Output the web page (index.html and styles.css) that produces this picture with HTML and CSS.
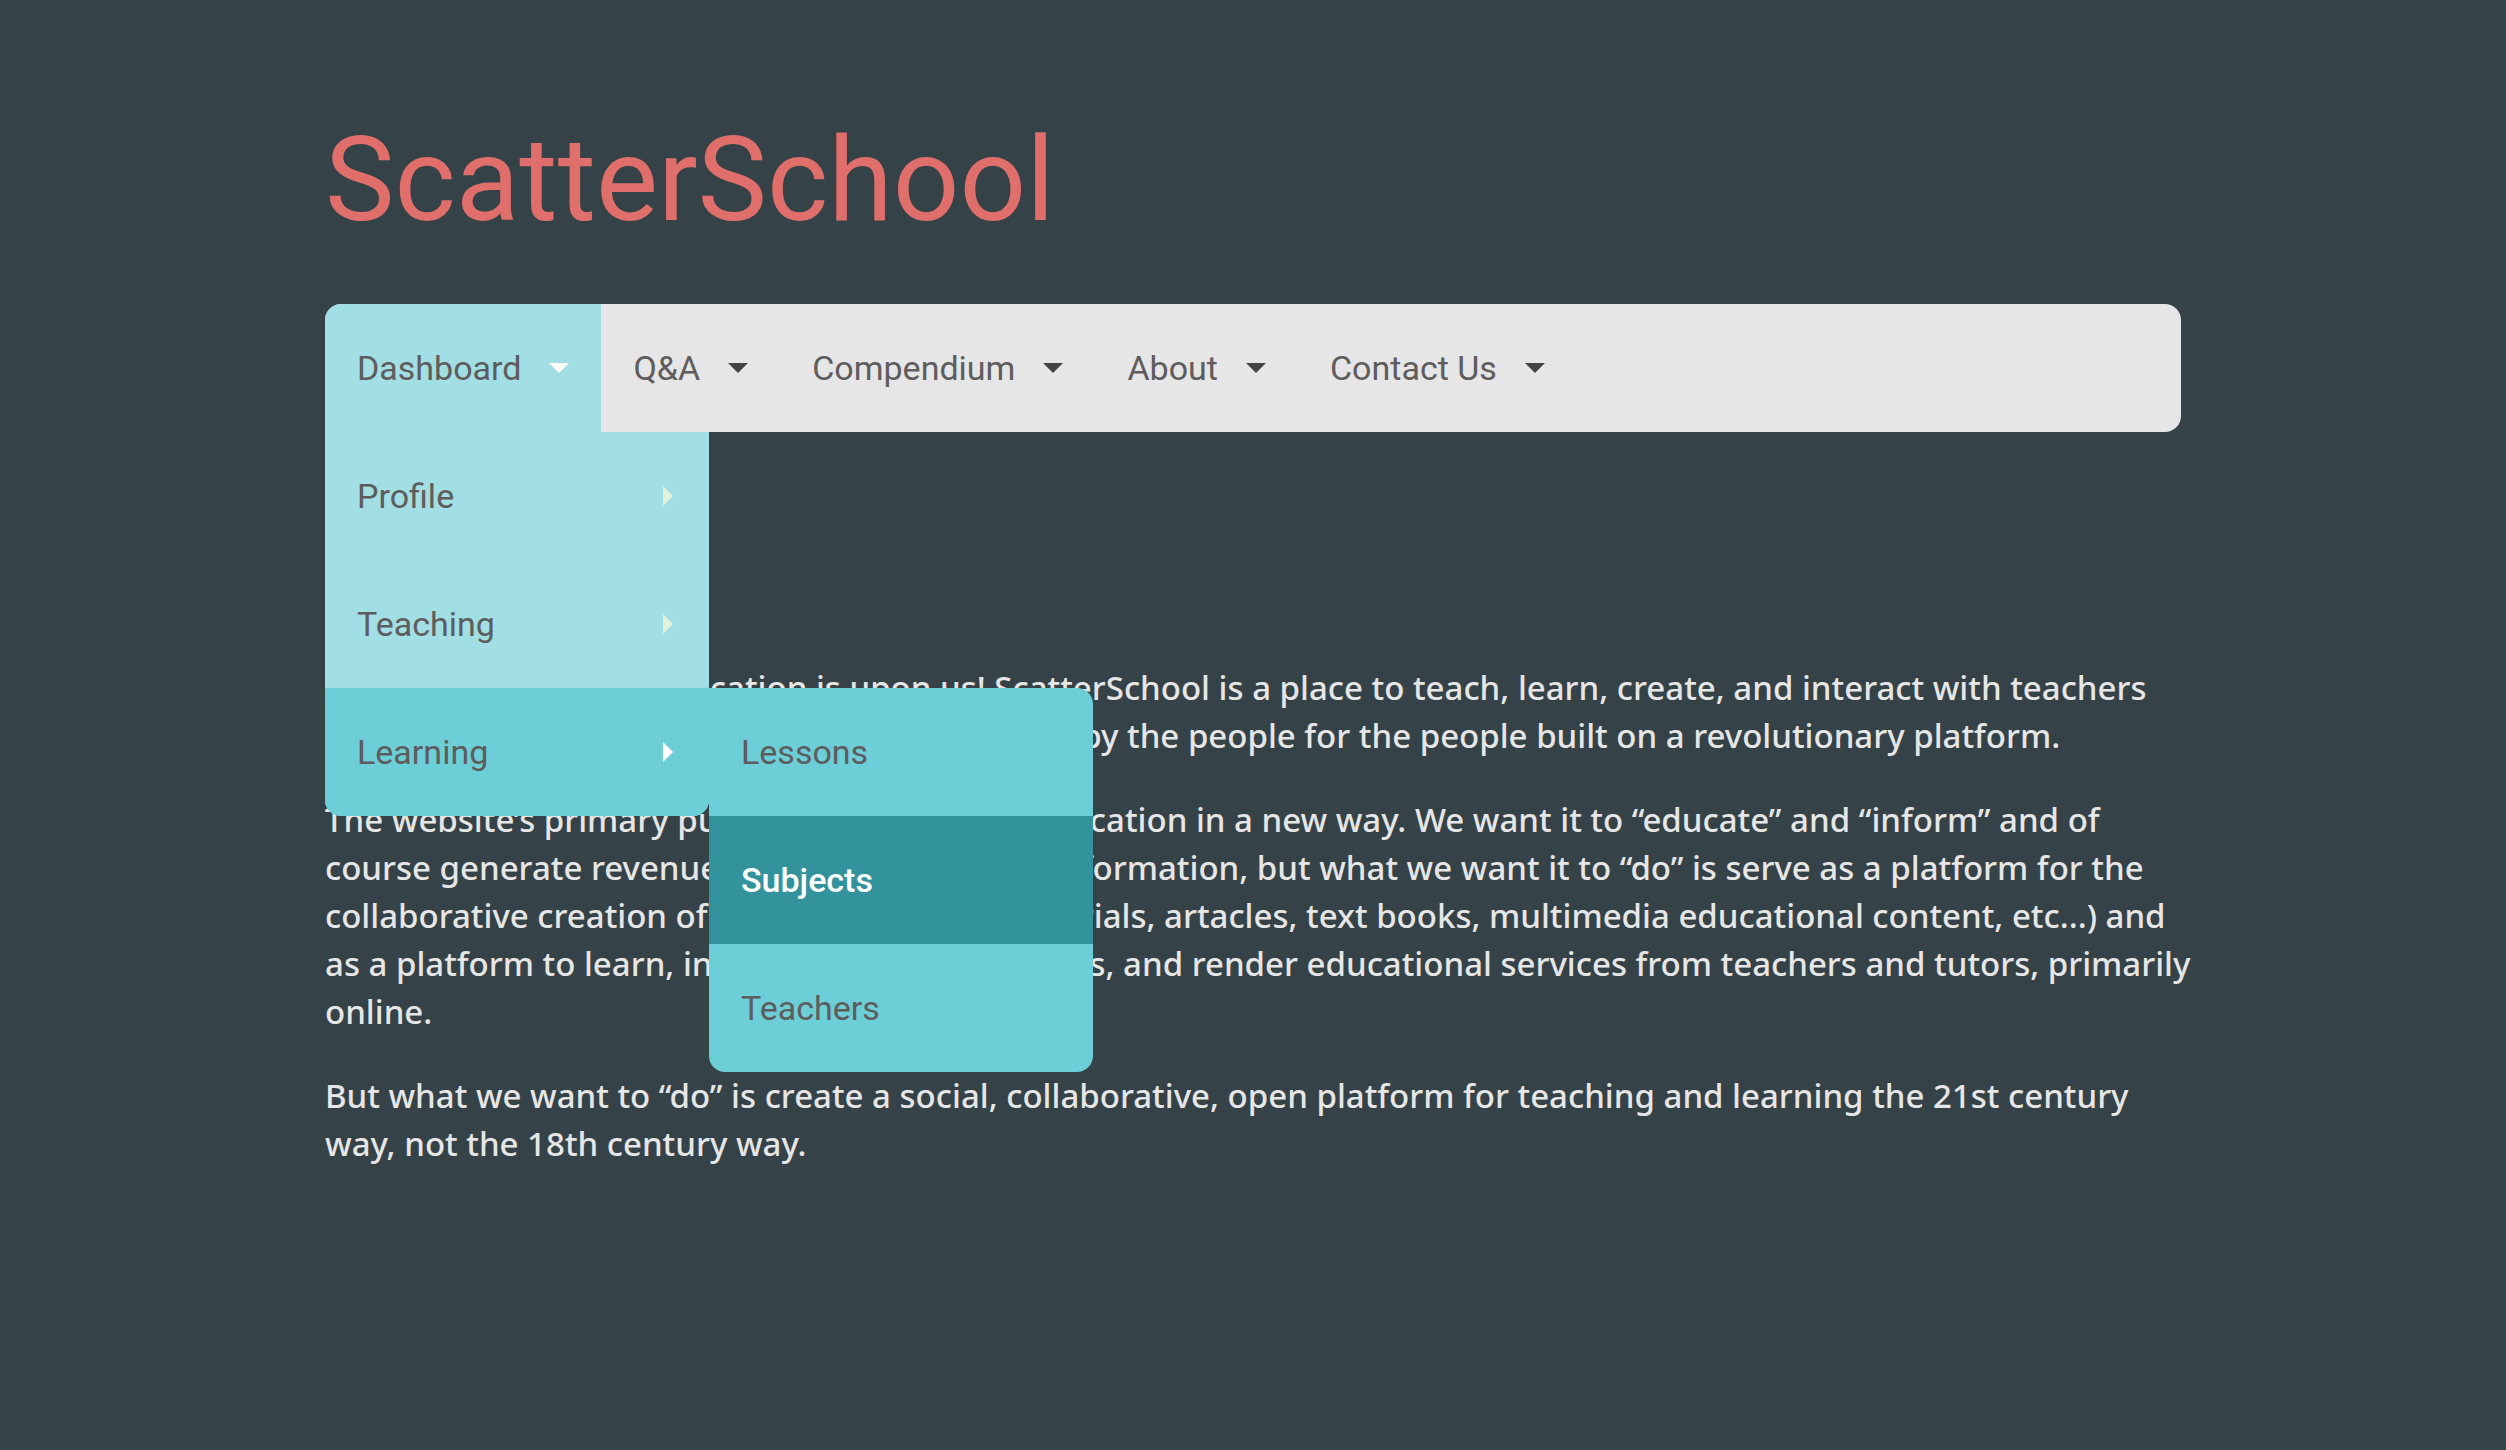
FILE: index.html
```html
<!DOCTYPE html>
<html lang="en">
<head>
  <meta charset="utf-8">
  <meta name="viewport" content="width=device-width, initial-scale=1">
  <title>ScatterSchool</title>
  <link rel="stylesheet" href="styles.css">
</head>
<body>
  <div class="page">
    <header>
      <h1 class="site-title">ScatterSchool</h1>
      <nav class="nav" aria-label="Main">
        <ul class="menu-bar">
          <li class="menu-item is-open">
            <a class="menu-link" href="#dashboard">Dashboard <span class="caret-down"></span></a>
            <ul class="submenu">
              <li><a class="submenu-link" href="#profile">Profile <span class="caret-right"></span></a></li>
              <li><a class="submenu-link" href="#teaching">Teaching <span class="caret-right"></span></a></li>
              <li class="menu-item is-active">
                <a class="submenu-link" href="#learning">Learning <span class="caret-right"></span></a>
                <ul class="flyout">
                  <li><a class="submenu-link" href="#lessons">Lessons</a></li>
                  <li><a class="submenu-link is-hovered" href="#subjects">Subjects</a></li>
                  <li><a class="submenu-link" href="#teachers">Teachers</a></li>
                </ul>
              </li>
            </ul>
          </li>
          <li class="menu-item"><a class="menu-link" href="#qa">Q&amp;A <span class="caret-down"></span></a></li>
          <li class="menu-item"><a class="menu-link" href="#compendium">Compendium <span class="caret-down"></span></a></li>
          <li class="menu-item"><a class="menu-link" href="#about">About <span class="caret-down"></span></a></li>
          <li class="menu-item"><a class="menu-link" href="#contact">Contact Us <span class="caret-down"></span></a></li>
        </ul>
      </nav>
    </header>
    <main class="content">
      <p>A new generation in education is upon us! ScatterSchool is a place to teach, learn, create, and interact with teachers<br>
      and students from around the world. It is made by the people for the people built on a revolutionary platform.</p>
      <p>The website’s primary purpose is to improve education in a new way. We want it to “educate” and “inform” and of<br>
      course generate revenue by providing helpful information, but what we want it to “do” is serve as a platform for the<br>
      collaborative creation of useful knowledge (tutorials, artacles, text books, multimedia educational content, etc...) and<br>
      as a platform to learn, interact with fellow writers, and render educational services from teachers and tutors, primarily<br>
      online.</p>
      <p>But what we want to “do” is create a social, collaborative, open platform for teaching and learning the 21st century<br>
      way, not the 18th century way.</p>
    </main>
  </div>
</body>
</html>
```
FILE: styles.css
```css
* {
  box-sizing: border-box;
}

body {
  margin: 0;
  background: #354247;
  color: #e6e6e6;
  font-family: "Noto Sans", sans-serif;
}

ul {
  margin: 0;
  padding: 0;
  list-style: none;
}

.page {
  max-width: 1856px;
  margin: 0 auto;
  padding: 112px 0;
}

.site-title {
  margin: 0 0 56px;
  color: #e06f6b;
  font: 400 117px/136px Roboto, sans-serif;
}

/* Navigation */
.nav {
  font: 400 34px/40px Roboto, sans-serif;
}

.menu-bar {
  display: flex;
  border-radius: 16px;
  background: #e6e6e6;
}

.menu-item {
  position: relative;
}

.menu-link,
.submenu-link {
  display: flex;
  align-items: center;
  gap: 28px;
  padding: 44px 32px;
  color: #5e5c5c;
  text-decoration: none;
}

.submenu-link {
  justify-content: space-between;
  padding-right: 36px;
}

.caret-down {
  border: 10px solid transparent;
  border-top-color: #444;
  border-bottom: 0;
}

.caret-right {
  border: 10px solid transparent;
  border-left-color: #e5f0d8;
  border-right: 0;
}

.is-open > .menu-link {
  border-top-left-radius: 16px;
  background: #a1dfe4;
}

.is-open > .menu-link .caret-down {
  border-top-color: #fff;
}

.submenu {
  position: absolute;
  top: 100%;
  left: 0;
  width: 384px;
  border-radius: 0 0 16px 16px;
  background: #a1dfe4;
}

.is-active {
  border-radius: 0 0 16px 16px;
  background: #6cced6;
}

.is-active > .submenu-link .caret-right {
  border-left-color: #fff;
}

.flyout {
  position: absolute;
  top: 0;
  left: 100%;
  width: 384px;
  border-radius: 0 16px 16px 16px;
  background: #6cced6;
}

.is-hovered {
  background: #33939c;
  color: #fff;
  font-weight: 500;
}

/* Body copy */
.content {
  padding-top: 232px;
  font-size: 33px;
  font-weight: 500;
  line-height: 48px;
  white-space: nowrap;
}

.content p {
  margin: 0 0 36px;
}
```
